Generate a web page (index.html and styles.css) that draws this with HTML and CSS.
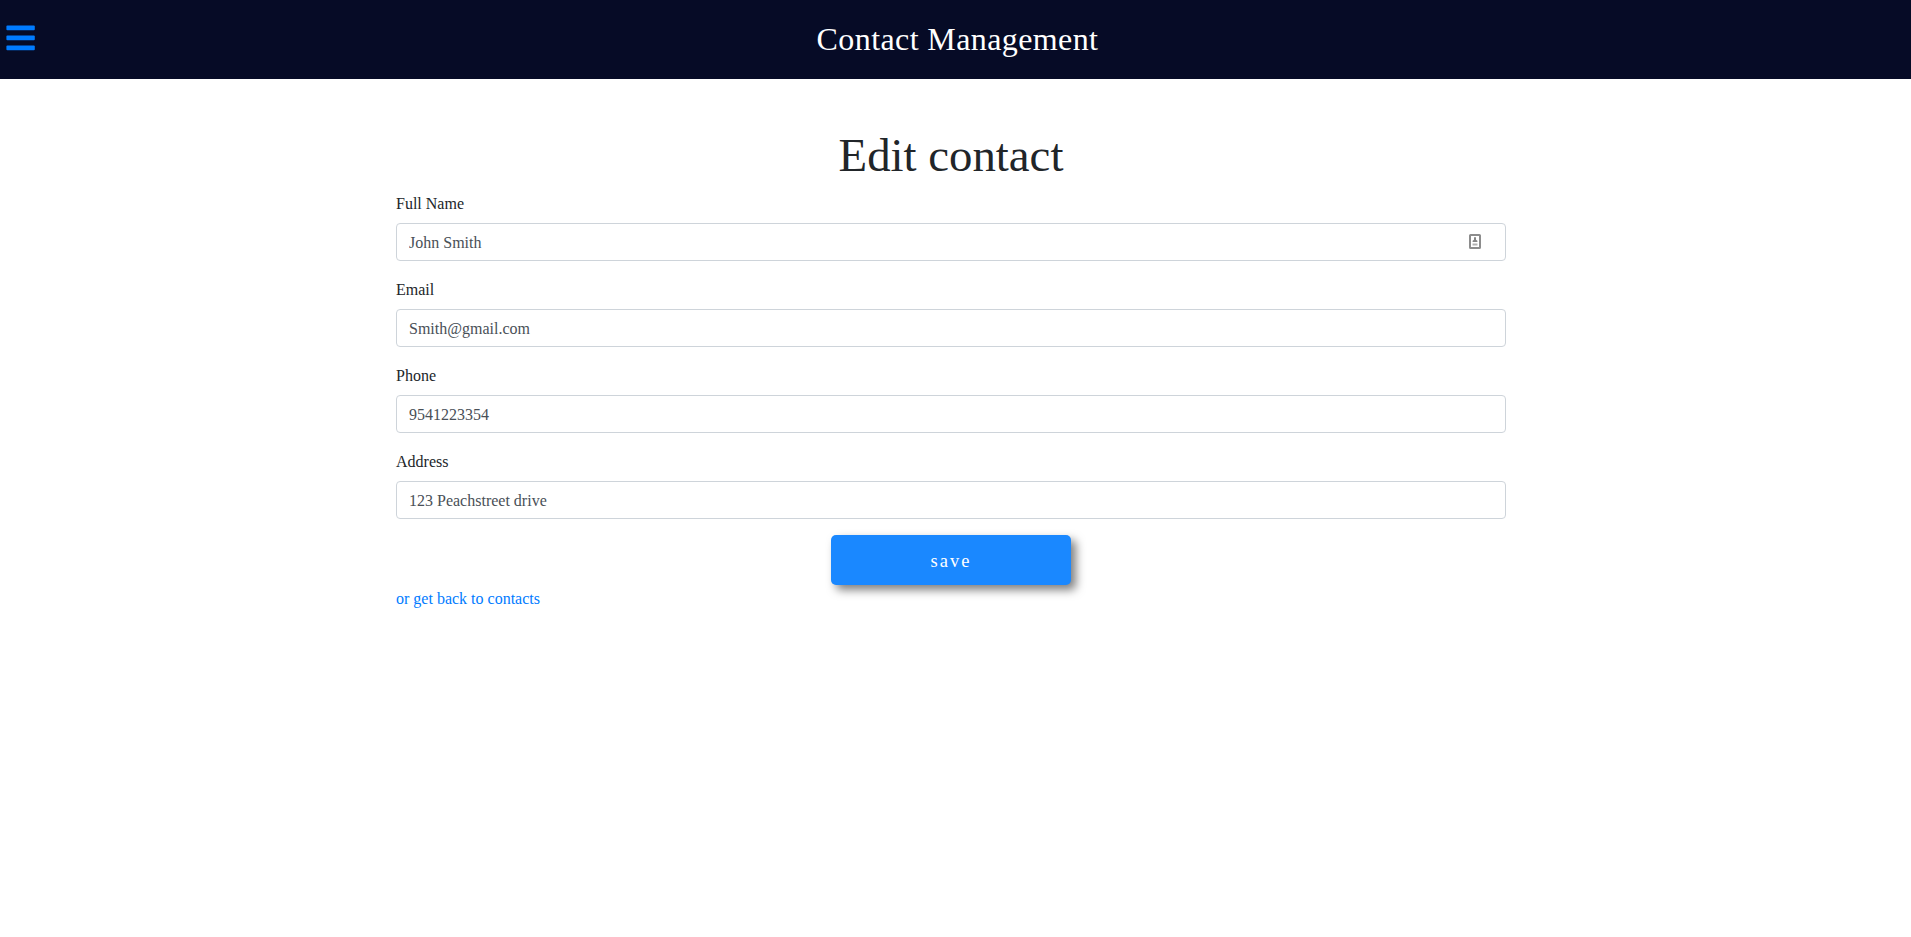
FILE: index.html
```html
<!DOCTYPE html>
<html lang="en">
<head>
<meta charset="utf-8">
<title>Contact Management</title>
<link rel="stylesheet" href="styles.css">
</head>
<body>
<header class="navbar">
  <button class="menu-toggle" aria-label="Menu">
    <svg class="menu-icon" viewBox="0 0 29 26" width="29" height="26">
      <rect y=".6" x=".4" width="28.400" height="4.700" rx="1"/><rect y="10.600" x=".4" width="28.400" height="4.700" rx="1"/><rect y="20.600" x=".4" width="28.400" height="4.700" rx="1"/>
    </svg>
  </button>
  <div class="brand">Contact Management</div>
</header>
<main class="container">
  <h1 class="title">Edit contact</h1>
  <form class="form">
    <div class="group">
      <label class="label" for="name">Full Name</label>
      <div class="control">
        <input class="input" id="name" type="text" value="John Smith">
        <svg class="autofill" viewBox="0 0 12 15" width="12" height="15">
          <rect x="1" y="1" width="10" height="13" rx=".6" fill="#fff" stroke="#8c8c8c" stroke-width="2"/>
          <path d="M6 3a1 1 0 0 1 1 1v1.700l1.400 1V8H3.600V6.700l1.400-1V4a1 1 0 0 1 1-1z" fill="#858585"/>
          <path d="M3.500 10.500h5" stroke="#b0b0b0" stroke-width="2"/>
        </svg>
      </div>
    </div>
    <div class="group">
      <label class="label" for="email">Email</label>
      <input class="input" id="email" type="text" value="Smith@gmail.com">
    </div>
    <div class="group">
      <label class="label" for="phone">Phone</label>
      <input class="input" id="phone" type="text" value="9541223354">
    </div>
    <div class="group">
      <label class="label" for="address">Address</label>
      <input class="input" id="address" type="text" value="123 Peachstreet drive">
    </div>
    <button class="save" type="button">save</button>
  </form>
  <a class="back" href="#">or get back to contacts</a>
</main>
</body>
</html>
```
FILE: styles.css
```css
*, *::before, *::after { box-sizing: border-box; }
body {
  margin: 0;
  background: #fff;
  color: #212529;
  font: 16px/24px "Liberation Serif", "Times New Roman", serif;
}
.navbar {
  display: grid;
  grid-template-columns: 40px 1fr 36px;
  align-items: center;
  height: 79px;
  background: #060b26;
}
.menu-toggle {
  display: flex;
  margin: 0 0 3px;
  padding: 0 0 0 6px;
  border: 0;
  background: none;
}
.menu-icon { fill: #007bff; }
.brand {
  padding-bottom: 1px;
  color: #fff;
  font-size: 32px;
  line-height: 48px;
  letter-spacing: .4px;
  text-align: center;
}
.container {
  width: 1110px;
  margin-left: 396px;
  padding-top: 48px;
}
.title {
  margin: 0 0 8px;
  font-size: 46.8px;
  font-weight: 400;
  line-height: 56px;
  text-align: center;
}
.form { display: flex; flex-direction: column; }
.group { margin-bottom: 16px; }
.label { display: block; height: 24px; margin-bottom: 8px; padding-top: 1px; }
.control { position: relative; }
.input {
  display: block;
  width: 100%;
  height: 38px;
  padding: 7px 12px 5px;
  border: 1px solid #ced4da;
  border-radius: 4px;
  background: #fff;
  color: #495057;
  font: inherit;
}
.autofill { position: absolute; top: 11px; right: 25px; }
.save {
  align-self: center;
  width: 240px;
  height: 50px;
  padding: 2px 0 0;
  border: 0;
  border-radius: 5px;
  background: #1a88ff;
  box-shadow: 5px 5px 10px rgba(0, 0, 0, .5);
  color: #fff;
  font: 18.5px/24px "Liberation Serif", "Times New Roman", serif;
  letter-spacing: 2px;
}
.back {
  display: inline-block;
  margin-top: 2px;
  color: #007bff;
  text-decoration: none;
}
```
